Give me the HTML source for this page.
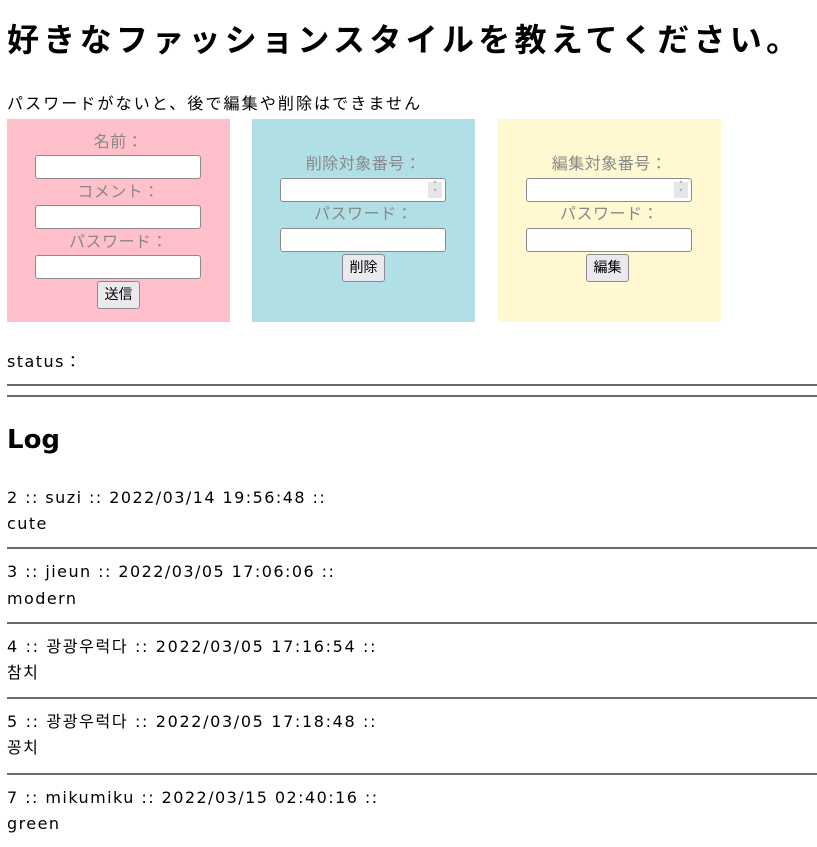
<!DOCTYPE html>
<html><head><meta charset="utf-8"><style>
body{margin:0;width:817px;height:847px;overflow:hidden;background:#fff;font-family:"DejaVu Sans","Noto Sans CJK JP","Noto Sans CJK KR",sans-serif;color:#000;position:relative}
.a{position:absolute;white-space:nowrap}
.box{position:absolute;top:119px;width:223px;height:203px}
.lbl{position:absolute;left:0;width:100%;text-align:center;color:#888;font-size:16px;line-height:20px;letter-spacing:0.5px}
.in{position:absolute;left:28px;width:164px;height:22px;background:#fff;border:1px solid #8a8a8f;border-radius:3px}
.sp{position:absolute;right:3px;top:3px;width:14px;height:16px;background:#e6e6ea;font-size:9px;color:#888;text-align:center;line-height:8px}
.btn{position:absolute;height:26px;background:#eaeaee;border:1px solid #8a8a8f;border-radius:3px;font-size:14px;line-height:26px;text-align:center;width:41px}
.hr{position:absolute;left:7px;width:810px;height:2px;background:#6b6b6b}
.t{font-size:16px;line-height:20px;letter-spacing:1.45px}
</style></head><body>
<div class="a" style="left:7px;top:18px;font-size:32px;font-weight:bold;line-height:44px;letter-spacing:4.3px">好きなファッションスタイルを教えてください。</div>
<div class="a" style="left:7px;top:94px;font-size:16px;line-height:20px;letter-spacing:2.1px">パスワードがないと、後で編集や削除はできません</div>

<div class="box" style="left:7px;background:#ffc0cb">
 <div class="lbl" style="top:13px">名前：</div>
 <div class="in" style="top:36px"></div>
 <div class="lbl" style="top:63px">コメント：</div>
 <div class="in" style="top:86px"></div>
 <div class="lbl" style="top:113px">パスワード：</div>
 <div class="in" style="top:136px"></div>
 <div class="btn" style="left:90px;top:162px">送信</div>
</div>
<div class="box" style="left:252px;background:#b0e0e6">
 <div class="lbl" style="top:35px">削除対象番号：</div>
 <div class="in" style="top:59px"><div class="sp">˄<br>˅</div></div>
 <div class="lbl" style="top:85px">パスワード：</div>
 <div class="in" style="top:109px"></div>
 <div class="btn" style="left:90px;top:135px">削除</div>
</div>
<div class="box" style="left:498px;background:#fff8d0">
 <div class="lbl" style="top:35px">編集対象番号：</div>
 <div class="in" style="top:59px"><div class="sp">˄<br>˅</div></div>
 <div class="lbl" style="top:85px">パスワード：</div>
 <div class="in" style="top:109px"></div>
 <div class="btn" style="left:88px;top:135px">編集</div>
</div>

<div class="a t" style="left:7px;top:352px">status：</div>
<div class="hr" style="top:384px"></div>
<div class="hr" style="top:395px"></div>
<div class="a" style="left:7px;top:424px;font-size:26px;font-weight:bold;line-height:32px">Log</div>

<div class="a t" style="left:7px;top:488px">2 :: suzi :: 2022/03/14 19:56:48 ::</div>
<div class="a t" style="left:7px;top:514px">cute</div>
<div class="hr" style="top:547px"></div>
<div class="a t" style="left:7px;top:562px">3 :: jieun :: 2022/03/05 17:06:06 ::</div>
<div class="a t" style="left:7px;top:589px">modern</div>
<div class="hr" style="top:622px"></div>
<div class="a t" style="left:7px;top:637px;letter-spacing:1.65px">4 :: 광광우럭다 :: 2022/03/05 17:16:54 ::</div>
<div class="a t" style="left:7px;top:663px">참치</div>
<div class="hr" style="top:697px"></div>
<div class="a t" style="left:7px;top:712px;letter-spacing:1.65px">5 :: 광광우럭다 :: 2022/03/05 17:18:48 ::</div>
<div class="a t" style="left:7px;top:738px">꽁치</div>
<div class="hr" style="top:773px"></div>
<div class="a t" style="left:7px;top:788px">7 :: mikumiku :: 2022/03/15 02:40:16 ::</div>
<div class="a t" style="left:7px;top:814px">green</div>
</body></html>
